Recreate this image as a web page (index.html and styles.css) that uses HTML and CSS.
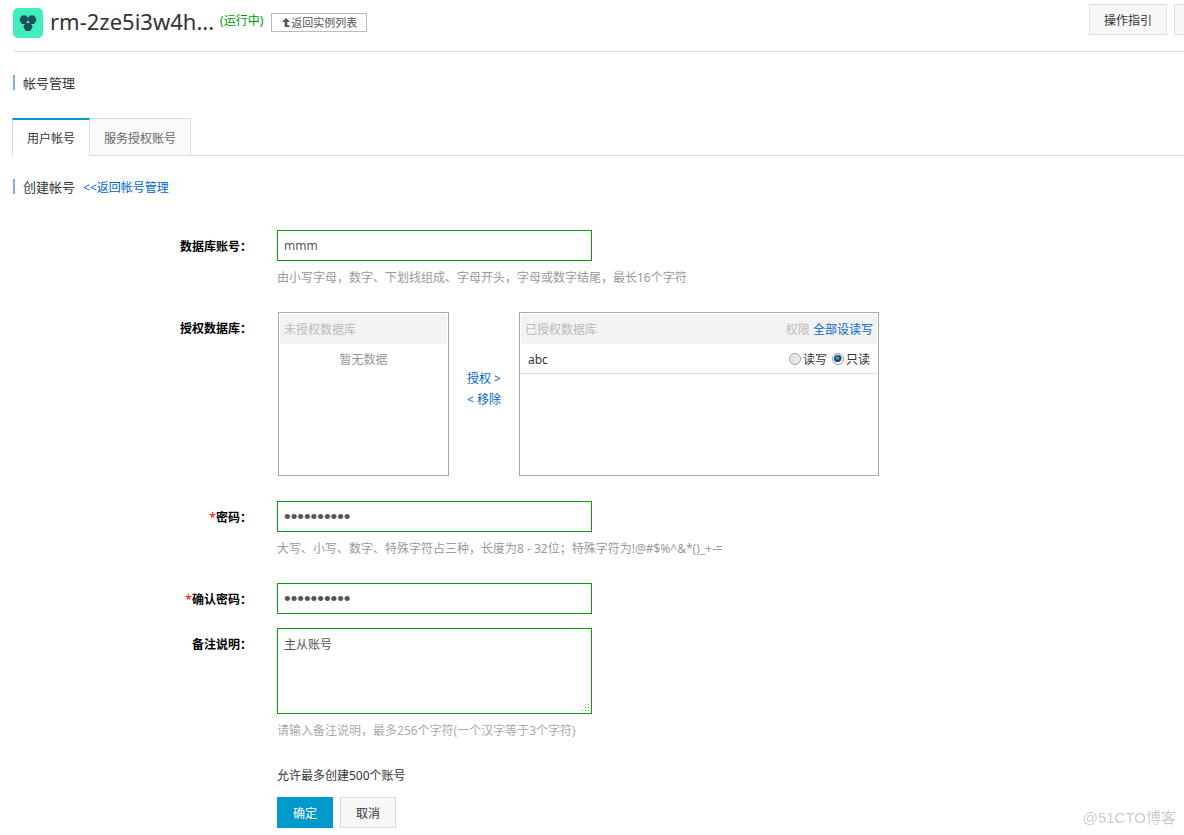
FILE: index.html
```html
<!DOCTYPE html>
<html lang="zh-CN">
<head>
<meta charset="utf-8">
<title>帐号管理</title>
<link rel="stylesheet" href="styles.css">
</head>
<body>
<main class="page">
  <header class="topbar">
    <svg class="logo" viewBox="0 0 30 30" aria-hidden="true">
      <rect width="30" height="30" rx="5" fill="#40efbd"/>
      <g fill="#1f4e5a">
        <path d="M8.800 7.500h4.600l2.400 4.200-2.400 4.200H8.800l-2.400-4.200z"/>
        <path d="M16.600 7.500h4.600l2.400 4.200-2.400 4.200h-4.600l-2.400-4.200z"/>
        <path d="M12.700 14.500h4.600l2.400 4.200-2.400 4.200h-4.600l-2.400-4.200z"/>
      </g>
      <path d="M15 12l1.800 3h-3.600z" fill="#40efbd"/>
    </svg>
    <h1 class="instance">rm-2ze5i3w4h...</h1>
    <span class="status">(运行中)</span>
    <button class="back" type="button">
      <svg class="back-icon" viewBox="0 0 9 10" aria-hidden="true"><path d="M4.500 0L9 4.500H6V8h2.500v2H3V4.500H0z" fill="#555"/></svg>返回实例列表
    </button>
    <div class="actions">
      <button class="btn guide" type="button">操作指引</button>
      <button class="btn guide" type="button" aria-label="更多"></button>
    </div>
  </header>

  <h2 class="section">帐号管理</h2>

  <nav class="tabs">
    <a class="tab active" href="#user">用户帐号</a>
    <a class="tab" href="#service">服务授权账号</a>
  </nav>

  <div class="section-row">
    <h2 class="section">创建帐号</h2>
    <a class="link" href="#back">&lt;&lt;返回帐号管理</a>
  </div>

  <form class="form">
    <div class="row">
      <label class="label" for="account">数据库账号：</label>
      <div class="field">
        <input class="input" id="account" type="text" value="mmm">
        <p class="hint">由小写字母，数字、下划线组成、字母开头，字母或数字结尾，最长16个字符</p>
      </div>
    </div>

    <div class="row row-db">
      <span class="label">授权数据库：</span>
      <div class="transfer">
        <section class="box">
          <div class="box-head">未授权数据库</div>
          <p class="empty">暂无数据</p>
        </section>
        <div class="moves">
          <a class="link" href="#grant">授权 &gt;</a>
          <a class="link" href="#remove">&lt; 移除</a>
        </div>
        <section class="box">
          <div class="box-head">
            <span>已授权数据库</span>
            <span class="perm">权限 <a class="link" href="#all">全部设读写</a></span>
          </div>
          <div class="db">
            <span>abc</span>
            <span class="modes">
              <label class="mode"><input class="radio" type="radio" name="mode">读写</label>
              <label class="mode"><input class="radio" type="radio" name="mode" checked>只读</label>
            </span>
          </div>
        </section>
      </div>
    </div>

    <div class="row">
      <label class="label" for="pwd"><span class="star">*</span>密码：</label>
      <div class="field">
        <input class="input password" id="pwd" type="password" value="abcdefghij">
        <p class="hint">大写、小写、数字、特殊字符占三种，长度为8 - 32位；特殊字符为!@#$%^&amp;*()_+-=</p>
      </div>
    </div>

    <div class="row row-confirm">
      <label class="label" for="confirm"><span class="star">*</span>确认密码：</label>
      <div class="field">
        <input class="input password" id="confirm" type="password" value="abcdefghij">
      </div>
    </div>

    <div class="row">
      <label class="label" for="note">备注说明：</label>
      <div class="field">
        <div class="note-wrap">
          <textarea class="input note" id="note">主从账号</textarea>
          <svg class="grip" viewBox="0 0 8 8" aria-hidden="true"><path d="M6 0h1v1H6zM3 3h1v1H3zM6 3h1v1H6zM0 6h1v1H0zM3 6h1v1H3zM6 6h1v1H6z" fill="#888"/></svg>
        </div>
        <p class="hint light">请输入备注说明，最多256个字符(一个汉字等于3个字符)</p>
        <p class="limit">允许最多创建500个账号</p>
        <div class="buttons">
          <button class="btn primary" type="submit">确定</button>
          <button class="btn" type="button">取消</button>
        </div>
      </div>
    </div>
  </form>
</main>
<div class="watermark">@51CTO博客</div>
</body>
</html>
```
FILE: styles.css
```css
* { box-sizing: border-box; }

body {
  margin: 0;
  background: #fff;
  color: #333;
  font: 12px/20px "Noto Sans", "Noto Sans CJK SC", sans-serif;
  overflow-x: hidden;
}

h1, h2, p { margin: 0; font-weight: 400; }

button, input, textarea { font: inherit; color: inherit; }

.page { padding-left: 13px; }

.link { color: #06c; text-decoration: none; }

.topbar {
  display: flex;
  align-items: flex-start;
  height: 52px;
  border-bottom: 1px solid #ddd;
  overflow: hidden;
}

.logo { width: 30px; height: 30px; margin: 8px 7px 0 0; flex: none; }

.instance { font-size: 22px; line-height: 30px; margin-top: 6px; }

.status { color: #090; margin: 11px 8px 0 6px; }

.back {
  display: flex;
  align-items: center;
  gap: 1px;
  height: 19px;
  margin-top: 13px;
  padding: 0 9px 0 10px;
  border: 1px solid #bbb;
  background: #fff;
  color: #555;
  font-size: 11px;
}

.back-icon { width: 8px; height: 9px; }

.actions { display: flex; gap: 7px; margin: 4px -68px 0 auto; }

.btn {
  min-width: 56px;
  height: 31px;
  padding: 2px 14px 0;
  border: 1px solid #ddd;
  background: #f7f7f7;
}

.guide { width: 78px; }

.primary { background: #0099cc; border-color: #0099cc; color: #fff; }

.section {
  height: 15px;
  border-left: 2px solid #7ab1e0;
  padding-left: 8px;
  font-size: 13px;
  line-height: 17px;
}

.topbar + .section { margin-top: 23px; }

.section-row { display: flex; align-items: flex-start; gap: 8px; padding-top: 23px; }

.section-row .link { line-height: 18px; }

.tabs {
  display: flex;
  margin: 28px 0 0 -1px;
  border-bottom: 1px solid #ddd;
}

.tab {
  height: 37px;
  padding: 10px 14px 0;
  border: 1px solid #ddd;
  border-width: 1px 1px 0 0;
  background: #f9f9f9;
  color: #666;
  text-decoration: none;
}

.tab.active {
  height: 38px;
  margin-bottom: -1px;
  padding-top: 9px;
  border-width: 2px 1px 0;
  border-top-color: #09c;
  background: #fff;
  color: #333;
}

.form { padding-top: 33px; }

.row {
  display: grid;
  grid-template-columns: 239px minmax(0, 1fr);
  column-gap: 25px;
  margin-bottom: 25px;
}

.row:first-child, .row:nth-child(3) { margin-bottom: 24px; }

.row-confirm { margin-bottom: 14px; }

.label { padding-top: 7px; text-align: right; font-weight: 700; color: #000; }

.star { color: #f00; font-weight: 400; }

.input {
  display: block;
  width: 100%;
  max-width: 315px;
  height: 31px;
  padding: 0 6px;
  border: 1px solid #0a9d0a;
  border-radius: 0;
  outline: 0;
  background: #fff;
  color: #555;
}

.password { font-family: "Liberation Sans", sans-serif; font-size: 19px; }

.note-wrap { position: relative; max-width: 315px; }

.note { height: 86px; padding: 6px; }

.note::-webkit-resizer { display: none; }

.grip { position: absolute; right: 2px; bottom: 2px; width: 8px; height: 8px; pointer-events: none; }

.hint { margin-top: 7px; color: #999; }

.light { color: #aaa; }

.limit { margin-top: 25px; }

.buttons { display: flex; gap: 7px; margin-top: 11px; }

.transfer {
  display: grid;
  grid-template-columns: 171px 70px minmax(0, 360px);
  padding-left: 1px;
}

.box { height: 164px; border: 1px solid #aaa; padding: 1px; }

.box-head {
  display: flex;
  justify-content: space-between;
  height: 30px;
  padding: 6px 4px 0;
  background: #f2f2f2;
  color: #bbb;
}

.empty { padding-top: 6px; text-align: center; color: #999; }

.moves {
  display: flex;
  flex-direction: column;
  align-items: center;
  gap: 1px;
  padding-top: 57px;
}

.db {
  display: flex;
  justify-content: space-between;
  margin: 0 -1px;
  padding: 6px 8px 3px;
  border-bottom: 1px solid #ddd;
}

.modes { display: flex; gap: 5px; }

.mode { display: flex; align-items: center; gap: 2px; }

.radio {
  appearance: none;
  width: 12px;
  height: 12px;
  margin: 0 0 2px;
  border: 1px solid #999;
  border-radius: 50%;
  background: radial-gradient(circle at 60% 60%, #eee, #ccc);
  box-shadow: inset 0 0 0 1px #fff;
}

.radio:checked { background: radial-gradient(circle at 45% 40%, #6cc5ea 0, #134a70 30%, #134a70 45%, #f4f4f4 55%); }

.watermark {
  position: fixed;
  right: 8px;
  bottom: 7px;
  color: #ccc;
  font: 15px/20px "Liberation Sans", "Noto Sans CJK SC", sans-serif;
}
```
